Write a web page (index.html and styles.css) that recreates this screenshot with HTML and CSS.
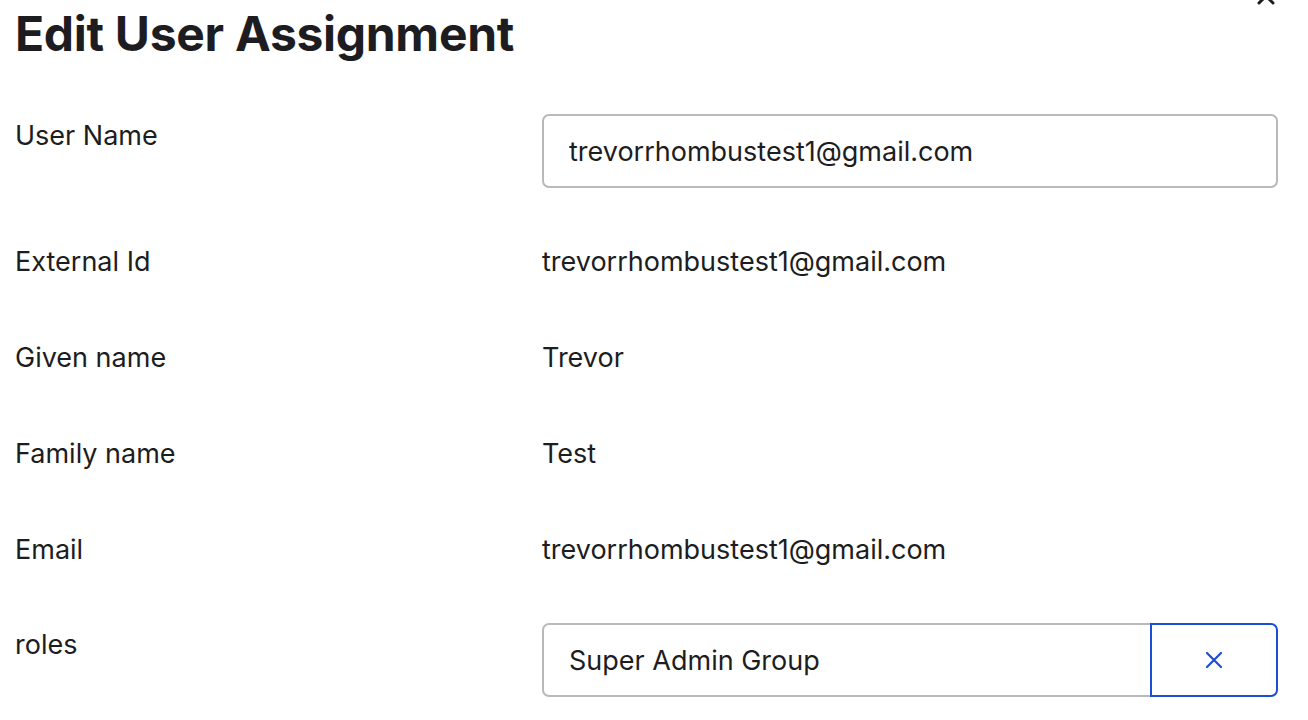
FILE: index.html
```html
<!DOCTYPE html>
<html lang="en">
<head>
    <meta charset="UTF-8">
    <meta name="viewport" content="width=device-width, initial-scale=1.0">
    <title>Edit User Assignment</title>
    <link rel="stylesheet" href="styles.css">
</head>
<body>
    <div class="modal">
        <button class="close-btn" aria-label="Close">
            <svg width="24" height="24" viewBox="0 0 24 24"><path d="M5 5L19 19M19 5L5 19" stroke="#1d1d21" stroke-width="3" stroke-linecap="round"/></svg>
        </button>
        <h1>Edit User Assignment</h1>
        <form class="fields">
            <div class="field-row input-row">
                <label for="userName">User Name</label>
                <input type="text" id="userName" class="text-input" value="trevorrhombustest1@gmail.com">
            </div>
            <div class="field-row">
                <span class="label">External Id</span>
                <span class="value">trevorrhombustest1@gmail.com</span>
            </div>
            <div class="field-row">
                <span class="label">Given name</span>
                <span class="value">Trevor</span>
            </div>
            <div class="field-row">
                <span class="label">Family name</span>
                <span class="value">Test</span>
            </div>
            <div class="field-row">
                <span class="label">Email</span>
                <span class="value">trevorrhombustest1@gmail.com</span>
            </div>
            <div class="field-row input-row">
                <label for="roles">roles</label>
                <div class="input-group">
                    <input type="text" id="roles" class="text-input" value="Super Admin Group">
                    <button type="button" class="remove-btn" aria-label="Remove">
                        <svg width="18" height="18" viewBox="0 0 18 18"><path d="M2 2L16 16M16 2L2 16" stroke="currentColor" stroke-width="2.2" stroke-linecap="round"/></svg>
                    </button>
                </div>
            </div>
        </form>
    </div>
</body>
</html>
```

FILE: styles.css
```css
body {
    margin: 0;
    font-family: Inter, "Noto Sans", sans-serif;
    color: #1d1d21;
    background: #fff;
}
.modal {
    position: relative;
    padding: 5px 30px 40px 15px;
}
.close-btn {
    position: absolute;
    top: -16px;
    right: 30px;
    padding: 0;
    border: none;
    background: none;
}
.close-btn svg {
    display: block;
}
h1 {
    margin: 0;
    font-size: 48px;
    line-height: 58px;
    font-weight: 700;
    letter-spacing: -0.3px;
}
.fields {
    margin-top: 57px;
    display: flex;
    flex-direction: column;
    gap: 64px;
}
.field-row {
    display: grid;
    grid-template-columns: 527px 1fr;
    font-size: 27px;
    line-height: 32px;
}
.input-row {
    margin: -6px 0;
}
.input-row:last-child {
    margin-top: -7px;
}
.input-row label {
    padding-top: 6px;
}
.text-input {
    box-sizing: border-box;
    width: 100%;
    height: 74px;
    padding: 0 25px;
    border: 2px solid #b8b8bd;
    border-radius: 7px;
    font-family: inherit;
    font-size: 27px;
    color: #1d1d21;
    background: #fff;
    outline: none;
}
.input-group {
    display: flex;
}
.input-group .text-input {
    flex: 1;
    border-radius: 7px 0 0 7px;
}
.remove-btn {
    width: 128px;
    height: 74px;
    margin-left: -2px;
    display: flex;
    align-items: center;
    justify-content: center;
    border: 2px solid #1a4ed6;
    border-radius: 0 7px 7px 0;
    background: #fff;
    color: #1a4ed6;
    padding: 0;
}
```
